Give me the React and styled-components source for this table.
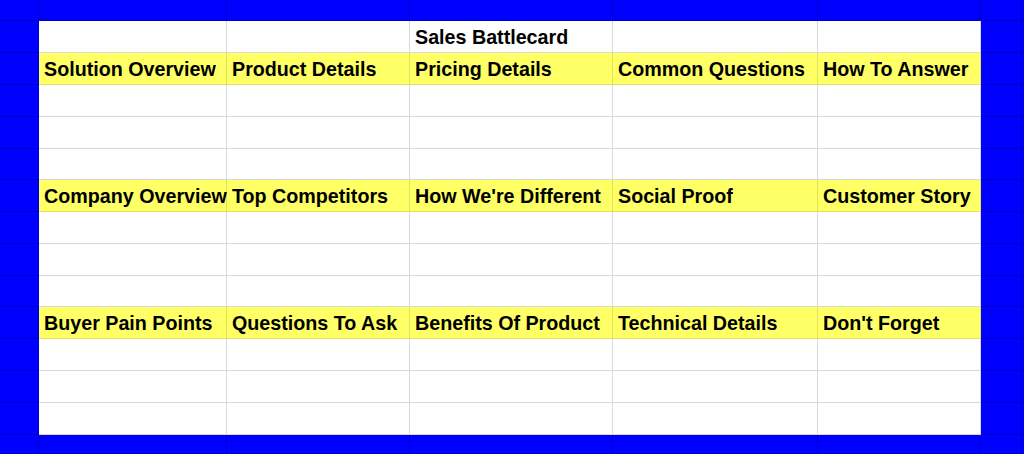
import React from 'react';
import styled, { createGlobalStyle } from 'styled-components';

const GlobalStyle = createGlobalStyle`
  html, body {
    margin: 0;
    padding: 0;
    background: #0000ff;
    overflow: hidden;
  }
`;

// Sheet colours
const tones = {
  blue: { bg: '#0000ff', line: '#0000c4' },
  white: { bg: '#ffffff', line: '#d9d9d9' },
  yellow: { bg: '#ffff66', line: '#e2e25c' },
};

const Sheet = styled.div`
  display: grid;
  grid-template-columns: 39px 188px 183px 203px 205px 163px 41px 1fr;
  grid-template-rows: 21px 32px 32px 32px 32px 31px 32px 32px 32px 31px 32px 32px 32px 32px 1fr;
  width: 1024px;
  height: 454px;
  overflow: hidden;
  font-family: "Liberation Sans", Arial, sans-serif;
`;

const Cell = styled.div`
  box-sizing: border-box;
  display: flex;
  align-items: center;
  padding: 2px 0 0 5px;
  background: ${p => tones[p.$tone].bg};
  border-right: 1px solid ${p => tones[p.$tone].line};
  border-bottom: 1px solid ${p => tones[p.$tone].line};
  font-size: 19.7px;
  font-weight: 700;
  color: #000;
  white-space: nowrap;
  overflow: visible;
`;

const sections = [
  ['Solution Overview', 'Product Details', 'Pricing Details', 'Common Questions', 'How To Answer'],
  ['Company Overview', 'Top Competitors', "How We're Different", 'Social Proof', 'Customer Story'],
  ['Buyer Pain Points', 'Questions To Ask', 'Benefits Of Product', 'Technical Details', "Don't Forget"],
];

const COLS = 8;

function BlueRow({ id }) {
  return Array.from({ length: COLS }, (_, i) => <Cell key={`${id}-${i}`} $tone="blue" />);
}

function SheetRow({ id, cells = [], tone = 'white' }) {
  return (
    <>
      <Cell $tone="blue" />
      {Array.from({ length: 5 }, (_, i) => (
        <Cell key={`${id}-${i}`} $tone={tone}>{cells[i] || ''}</Cell>
      ))}
      <Cell $tone="blue" />
      <Cell $tone="blue" />
    </>
  );
}

export default function App() {
  return (
    <>
      <GlobalStyle />
      <Sheet>
        <BlueRow id="top" />
        <SheetRow id="title" cells={['', '', 'Sales Battlecard']} />
        {sections.map((heads, s) => (
          <React.Fragment key={s}>
            <SheetRow id={`h${s}`} cells={heads} tone="yellow" />
            <SheetRow id={`a${s}`} />
            <SheetRow id={`b${s}`} />
            <SheetRow id={`c${s}`} />
          </React.Fragment>
        ))}
        <BlueRow id="bottom" />
      </Sheet>
    </>
  );
}
